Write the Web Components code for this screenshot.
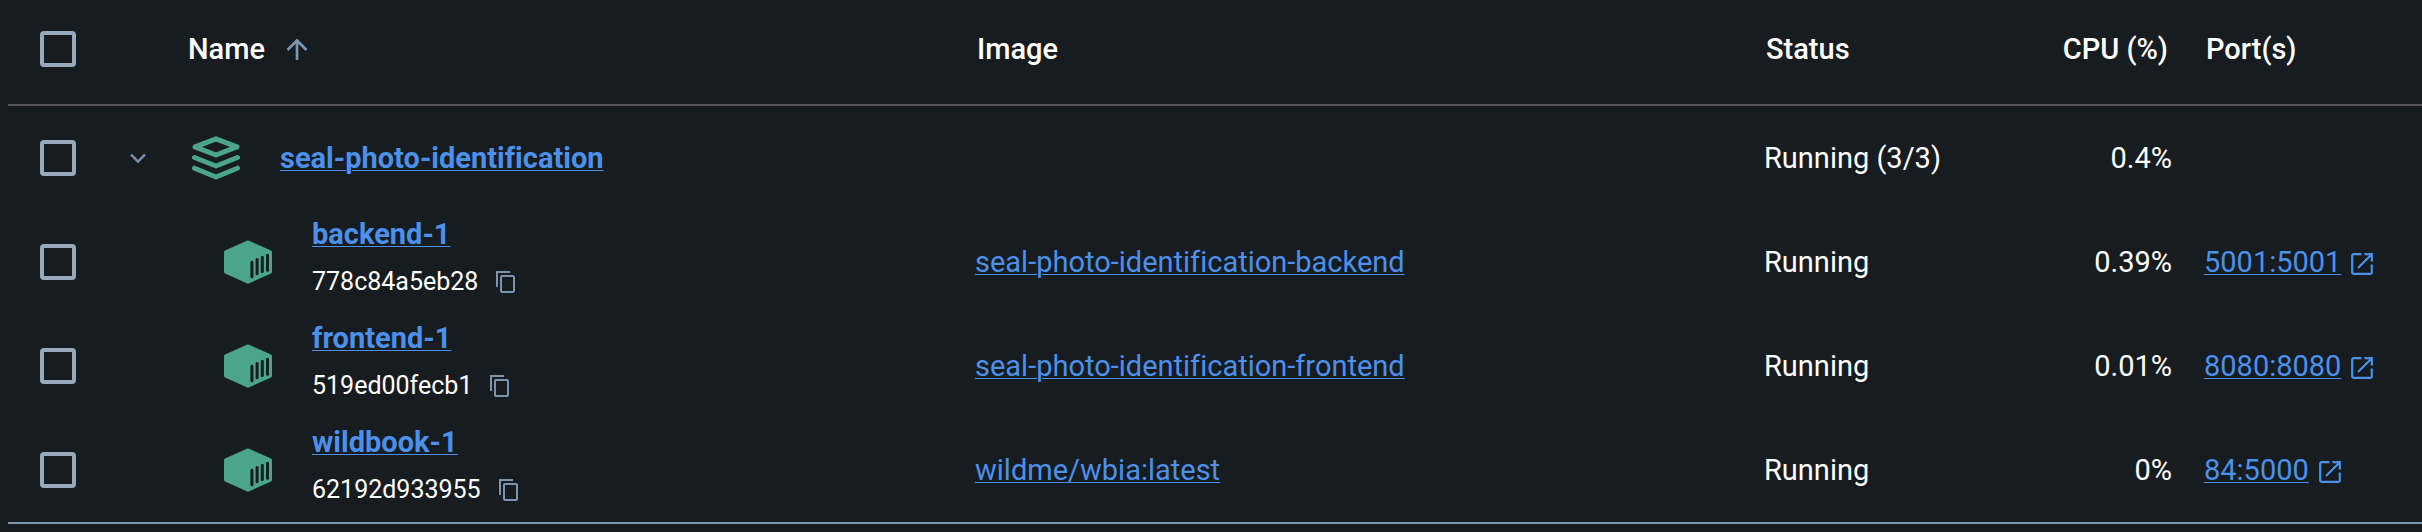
<!DOCTYPE html>
<html lang="en">
<head>
<meta charset="utf-8">
<title>Containers</title>
<style>
  html { background: #171c20; }
  body {
    margin: 0;
    padding-left: 8px;
    background: #171c20;
    color: #fff;
    font-family: Roboto, "Liberation Sans", sans-serif;
    font-size: 29px;
    line-height: 48px;
    font-variant-ligatures: none;
    --link: #4d90e9;
    --muted: #7d94ae;
    --box: #98a9bb;
    --running: #4ba48d;
    --rule: #555558;
  }
</style>
</head>
<body>
<container-table></container-table>
<script>
const glyphs = {
  sort: [24, 24, '<path d="M12 23V4M2.5 13 12 3.500l9.500 9.500" stroke-width="2.700"/>'],
  chevron: [18, 12, '<path d="M2 2.500 9 9.500l7-7" stroke-width="2.400"/>'],
  copy: [20, 22, '<path d="M14 1H1v15" stroke-width="2"/><rect x="5" y="5" width="13" height="16" rx="1" stroke-width="2"/>'],
  external: [22, 22, '<path d="M10.500 1.200H2.500Q1.200 1.200 1.200 2.500v17Q1.200 20.800 2.500 20.800h17q1.300 0 1.300-1.300V11.500M13.500 1.200h7.300v7.300M20.500 1.500 7 15" stroke-width="2.200"/>'],
  stack: [48, 44, '<path d="M24 2.800 45 10.800 24 19 3 10.800ZM2.500 21.500 24 30l21.500-8.500M2.500 32.200 24 41l21.500-8.800" stroke-width="5" stroke-linecap="round" stroke-linejoin="round"/>'],
  container: [48, 44, '<path d="M22.800.7q1.200-.5 2.400 0L47 10.600q1 .5 1 1.600v19.600q0 1.100-1 1.600L25.200 43.300q-1.200.5-2.400 0L1 33.400q-1-.5-1-1.600V12.200q0-1.100 1-1.600Z" fill="currentColor" stroke="none"/><path d="M27.900 22.200v14.600M33.100 19.500v14.300M38.300 17.200v14.300M43.500 15.200v15" stroke="#171c20" stroke-width="3" stroke-linecap="round"/>']
};

class GlyphIcon extends HTMLElement {
  constructor() { super(); this.attachShadow({ mode: 'open' }); }
  connectedCallback() {
    const [w, h, body] = glyphs[this.getAttribute('name')];
    this.shadowRoot.innerHTML = `
      <style>:host { display: inline-flex; flex: none; } svg { display: block; }</style>
      <svg width="${w}" height="${h}" viewBox="0 0 ${w} ${h}" fill="none" stroke="currentColor" aria-hidden="true">${body}</svg>`;
  }
}
customElements.define('glyph-icon', GlyphIcon);

class RowCheck extends HTMLElement {
  constructor() { super(); this.attachShadow({ mode: 'open' }); }
  connectedCallback() {
    this.shadowRoot.innerHTML = `
      <style>
        :host { display: flex; }
        input { appearance: none; box-sizing: border-box; width: 36px; height: 36px; margin: 0; border: 4px solid var(--box); border-radius: 4px; }
        input:checked { background: var(--link); }
      </style>
      <input type="checkbox" aria-label="${this.getAttribute('label')}">`;
  }
}
customElements.define('row-check', RowCheck);

class TextLink extends HTMLElement {
  constructor() {
    super();
    this.attachShadow({ mode: 'open' }).innerHTML = `
      <style>
        :host { display: inline-block; }
        a { color: var(--link); text-decoration: underline; text-decoration-thickness: 1px; text-underline-offset: 2px; }
      </style>
      <a href="#"><slot></slot></a>`;
  }
}
customElements.define('text-link', TextLink);

class PortLink extends HTMLElement {
  constructor() {
    super();
    this.attachShadow({ mode: 'open' }).innerHTML = `
      <style>
        :host { display: flex; align-items: center; gap: 10px; color: var(--link); }
        glyph-icon { padding-top: 4px; }
      </style>
      <text-link><slot></slot></text-link><glyph-icon name="external"></glyph-icon>`;
  }
}
customElements.define('port-link', PortLink);

class ContainerName extends HTMLElement {
  constructor() {
    super();
    this.attachShadow({ mode: 'open' }).innerHTML = `
      <style>
        :host { display: flex; align-items: center; gap: 40px; padding-left: 38px; }
        glyph-icon[name=container] { color: var(--running); }
        .text { padding-bottom: 8px; }
        .name { display: block; font-weight: 700; }
        .id { display: flex; align-items: center; gap: 18px; font-size: 25px; }
        button { display: flex; margin: 0; padding: 0; border: 0; background: none; color: var(--muted); }
      </style>
      <glyph-icon name="container"></glyph-icon>
      <div class="text">
        <text-link class="name"><slot name="name"></slot></text-link>
        <div class="id"><slot name="id"></slot><button aria-label="Copy container ID"><glyph-icon name="copy"></glyph-icon></button></div>
      </div>`;
  }
}
customElements.define('container-name', ContainerName);

class GroupName extends HTMLElement {
  constructor() {
    super();
    this.attachShadow({ mode: 'open' }).innerHTML = `
      <style>
        :host { display: flex; align-items: center; gap: 40px; padding-left: 6px; font-weight: 700; }
        glyph-icon { color: var(--running); }
      </style>
      <glyph-icon name="stack"></glyph-icon><text-link><slot></slot></text-link>`;
  }
}
customElements.define('group-name', GroupName);

const containers = [
  ['backend-1', '778c84a5eb28', 'seal-photo-identification-backend', '0.39%', '5001:5001'],
  ['frontend-1', '519ed00fecb1', 'seal-photo-identification-frontend', '0.01%', '8080:8080'],
  ['wildbook-1', '62192d933955', 'wildme/wbia:latest', '0%', '84:5000']
];

class ContainerTable extends HTMLElement {
  constructor() {
    super();
    this.attachShadow({ mode: 'open' }).innerHTML = `
      <style>
        :host { display: block; }
        table { width: 100%; table-layout: fixed; border-collapse: separate; border-spacing: 0; border-bottom: 2px solid var(--muted); }
        .check { width: 96px; } .toggle { width: 66px; } .status, .cpu { width: 220px; } .ports { width: 234px; }
        th, td { box-sizing: border-box; height: 104px; padding: 0 16px; text-align: left; vertical-align: middle; white-space: nowrap; }
        th { height: 106px; padding: 0 20px 6px 18px; border-bottom: 2px solid var(--rule); font-weight: 500; }
        th:first-child, td:first-child { padding-left: 32px; }
        th.num, td.num { text-align: right; }
        .sort { display: flex; align-items: center; gap: 20px; margin: 0; padding: 0; border: 0; background: none; color: inherit; font: inherit; }
        .sort glyph-icon, .expand { color: var(--muted); }
        .expand { display: flex; margin: 0; padding: 0 0 0 9px; border: 0; background: none; }
      </style>
      <table>
        <colgroup><col class="check"><col class="toggle"><col><col><col class="status"><col class="cpu"><col class="ports"></colgroup>
        <thead><tr>
          <th><row-check label="Select all"></row-check></th><th></th>
          <th aria-sort="ascending"><button class="sort">Name<glyph-icon name="sort"></glyph-icon></button></th>
          <th>Image</th><th>Status</th><th class="num">CPU (%)</th><th>Port(s)</th>
        </tr></thead>
        <tbody>
          <tr>
            <td><row-check label="Select seal-photo-identification"></row-check></td>
            <td><button class="expand" aria-label="Collapse group" aria-expanded="true"><glyph-icon name="chevron"></glyph-icon></button></td>
            <td><group-name>seal-photo-identification</group-name></td>
            <td></td><td>Running (3/3)</td><td class="num">0.4%</td><td></td>
          </tr>
          ${containers.map(([name, id, image, cpu, port]) => `
          <tr>
            <td><row-check label="Select ${name}"></row-check></td><td></td>
            <td><container-name><span slot="name">${name}</span><span slot="id">${id}</span></container-name></td>
            <td><text-link>${image}</text-link></td>
            <td>Running</td><td class="num">${cpu}</td>
            <td><port-link>${port}</port-link></td>
          </tr>`).join('')}
        </tbody>
      </table>`;
  }
}
customElements.define('container-table', ContainerTable);
</script>
</body>
</html>
